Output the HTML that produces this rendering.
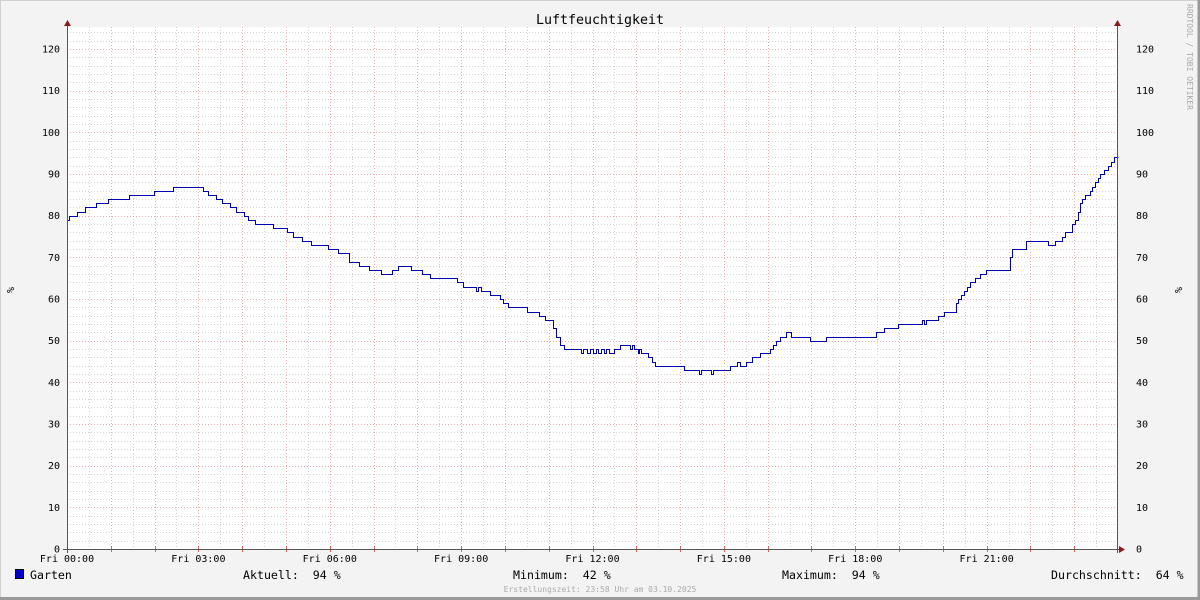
<!DOCTYPE html>
<html><head><meta charset="utf-8"><style>
html,body{margin:0;padding:0;background:#f3f3f3}
svg{display:block}
text{font-family:"DejaVu Sans Mono","Liberation Mono",monospace}
</style></head><body>
<svg id="s" width="1200" height="600" xmlns="http://www.w3.org/2000/svg">
<rect x="0" y="0" width="1200" height="600" fill="#f3f3f3"/>
<path d="M0.5 600V0.5H1199.5" stroke="#d0d0d0" fill="none"/>
<path d="M0 598.5H1199V0" stroke="#9a9a9a" stroke-width="3" fill="none"/>
<rect x="67" y="27" width="1051" height="522" fill="#fff"/>
<g id="grid"></g>
<path id="data" fill="none" stroke="#0000b0" stroke-width="1" shape-rendering="crispEdges"/>
<g stroke="#555"><line x1="67.5" y1="24" x2="67.5" y2="553"/><line x1="1117.5" y1="24" x2="1117.5" y2="553"/><line x1="63" y1="549.5" x2="1122" y2="549.5"/></g>
<path d="M64 26L67.5 20L71 26Z M1114 26L1117.5 20L1121 26Z M1119 546L1125 549.5L1119 553Z" fill="#8b1a1a"/>
<text x="600" y="24" font-size="13.3" text-anchor="middle" fill="#000">Luftfeuchtigkeit</text>
<text transform="translate(1187,4) rotate(90)" font-size="8" fill="#aaa">RRDTOOL / TOBI OETIKER</text>
<text transform="translate(7,287) rotate(90)" font-size="10" fill="#000">%</text>
<text transform="translate(1175,287) rotate(90)" font-size="10" fill="#000">%</text>
<g id="lab" font-size="10" fill="#000"></g>
<rect x="15.5" y="569.5" width="8" height="9" fill="#0000cc" stroke="#000"/>
<g font-size="11.6" fill="#000">
<text x="30" y="579">Garten</text>
<text x="243" y="579" xml:space="preserve">Aktuell:  94 %</text>
<text x="513" y="579" xml:space="preserve">Minimum:  42 %</text>
<text x="782" y="579" xml:space="preserve">Maximum:  94 %</text>
<text x="1051" y="579" xml:space="preserve">Durchschnitt:  64 %</text>
</g>
<text x="600" y="592" font-size="8" fill="#aaa" text-anchor="middle">Erstellungszeit: 23:58 Uhr am 03.10.2025</text>
</svg>
<script>
var NS="http://www.w3.org/2000/svg",g=document.getElementById('grid'),lab=document.getElementById('lab');
function el(p,t,a,txt){var e=document.createElementNS(NS,t);for(var k in a)e.setAttribute(k,a[k]);if(txt!=null)e.textContent=txt;p.appendChild(e);return e;}
function Y(v){return 549-v*500/120;}
var hp=1051/24;
for(var i=1;i<48;i++){var x=Math.round(67+i*hp/2)+0.5;var maj=i%2==0;
 el(g,'line',{x1:x,y1:27,x2:x,y2:549,stroke:maj?'#eab0b0':'#d4d4d4','stroke-dasharray':'1,2'});
 if(maj)el(g,'line',{x1:x,y1:546,x2:x,y2:552,stroke:'#e06060'});}
for(var v=2;v<=125;v+=2){var y=Math.round(Y(v))+0.5;var maj=v%10==0;
 el(g,'line',{x1:67,y1:y,x2:1118,y2:y,stroke:maj?'#eab0b0':'#d4d4d4','stroke-dasharray':'1,2'});}
for(var v=0;v<=120;v+=10){var y=Y(v)+3.5;el(lab,'text',{x:60,y:y,'text-anchor':'end'},''+v);el(lab,'text',{x:1136,y:y},''+v);}
var hrs=['00','03','06','09','12','15','18','21'];
for(var i=0;i<8;i++)el(lab,'text',{x:67+i*3*hp,y:562,'text-anchor':'middle'},'Fri '+hrs[i]+':00');
var d=[[67,79],[69,80],[77,81],[85,82],[96,83],[108,84],[129,85],[154,86],[173,87],[203,86],[208,85],[216,84],[222,83],[230,82],[236,81],[244,80],[248,79],[255,78],[273,77],[287,76],[293,75],[302,74],[311,73],[328,72],[338,71],[349,69],[359,68],[369,67],[381,66],[392,67],[398,68],[411,67],[422,66],[430,65],[457,64],[463,63],[476,62],[478,63],[481,62],[490,61],[500,60],[503,59],[508,58],[527,57],[539,56],[545,55],[553,53],[556,51],[560,49],[564,48],[581,47],[583,48],[587,47],[590,48],[593,47],[596,48],[598,47],[601,48],[604,47],[606,48],[609,47],[614,48],[620,49],[630,48],[632,49],[634,48],[638,47],[639,48],[641,47],[648,46],[652,45],[655,44],[684,43],[699,42],[701,43],[711,42],[713,43],[730,44],[737,45],[740,44],[746,45],[752,46],[760,47],[770,48],[773,49],[776,50],[780,51],[786,52],[791,51],[810,50],[826,51],[876,52],[884,53],[898,54],[922,55],[924,54],[926,55],[938,56],[944,57],[956,59],[958,60],[961,61],[964,62],[967,63],[970,64],[975,65],[980,66],[986,67],[1010,70],[1012,72],[1026,74],[1048,73],[1055,74],[1062,75],[1065,76],[1072,78],[1075,79],[1078,81],[1080,83],[1082,84],[1085,85],[1090,86],[1092,87],[1095,88],[1098,89],[1100,90],[1104,91],[1108,92],[1111,93],[1114,94],[1118,94]];
function R(y){return (Math.round(y)+0.5).toFixed(1);}
var p='M'+(d[0][0]+0.5)+' '+R(Y(d[0][1]));
for(var i=1;i<d.length;i++){p+=' H'+(d[i][0]+0.5)+' V'+R(Y(d[i][1]));}
document.getElementById('data').setAttribute('d',p);
</script>
</body></html>
